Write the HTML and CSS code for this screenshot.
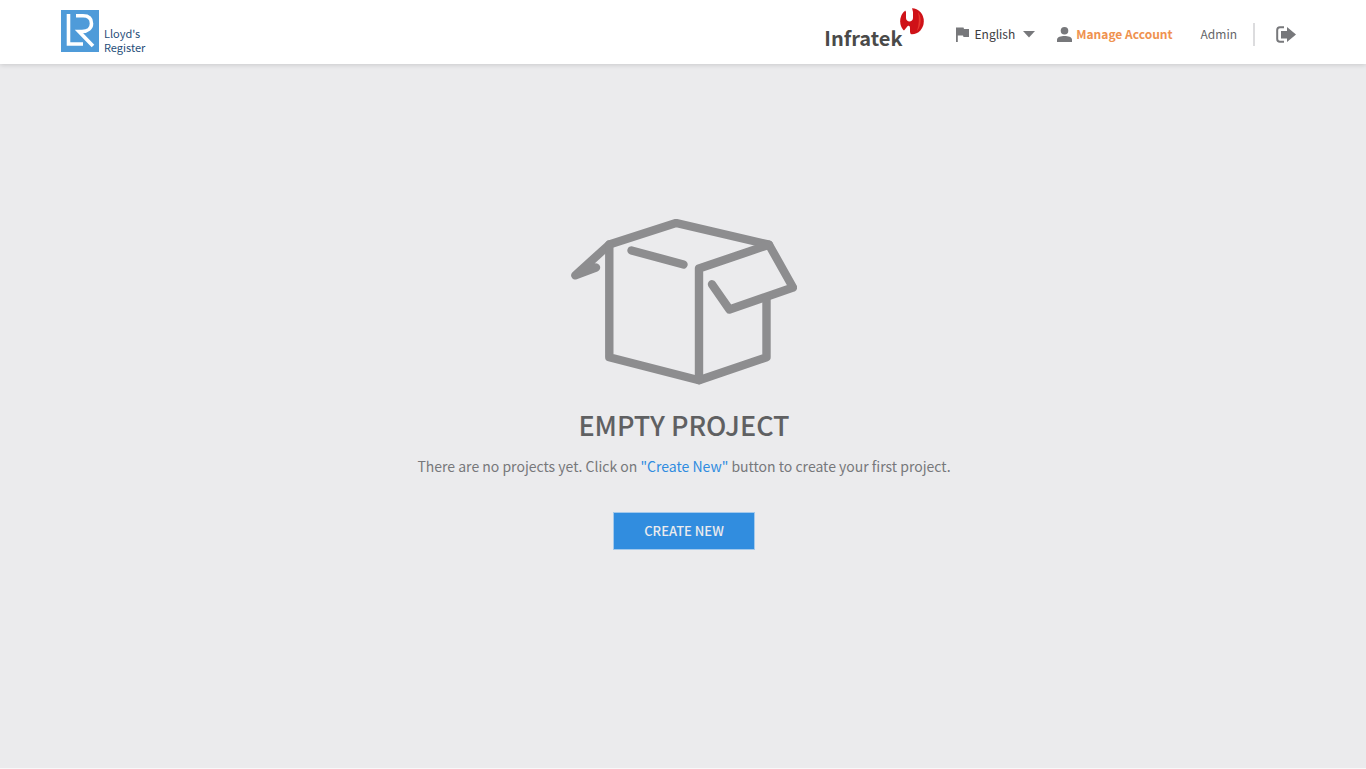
FILE: index.html
```html
<!DOCTYPE html>
<html lang="en">
<head>
<meta charset="utf-8">
<meta name="viewport" content="width=device-width, initial-scale=1">
<title>Projects</title>
<link rel="stylesheet" href="styles.css">
</head>
<body>
<header class="topbar">
  <a class="brand" href="#">
    <svg class="brand-mark" width="38" height="42" viewBox="0 0 38 42" aria-hidden="true">
      <rect width="38" height="42" fill="#4f9bd9"/>
      <path d="M7.500 4V34H22" fill="none" stroke="#fff" stroke-width="3.600"/>
      <path d="M15 5.800H22C28 5.800 30.500 9 30.500 13.500S27 21.500 21 21.500H18L32 36" fill="none" stroke="#fff" stroke-width="3.600"/>
    </svg>
    <span class="brand-name">Lloyd's<br>Register</span>
  </a>
  <div class="tools">
    <div class="partner">
      <span class="partner-name">Infratek</span>
      <svg class="partner-mark" width="24" height="27" viewBox="0 0 24 27" aria-hidden="true">
        <ellipse cx="12" cy="13.300" rx="11.800" ry="13" fill="#cf1218"/>
        <path d="M18 4C21.500 8 22 17 17 23C19 17 19.500 10 18 4Z" fill="#e8392f"/>
        <path d="M4 0L6 4V10C6 14.500 13 14.500 13 10V4L12 0Z" fill="#fff"/>
        <path d="M0 22L4 22.500L6.500 19.500C8 17 10 17.500 10 20V24L11 27H0Z" fill="#fff"/>
      </svg>
    </div>
    <button class="language" type="button">
      <svg width="13" height="15" viewBox="0 0 13 15" aria-hidden="true"><path d="M0 .5H7.500L8 2H13V10H7.500L7 8.500H1.800V15H0Z" fill="#77787b"/></svg>
      <span>English</span>
      <svg class="caret" width="12" height="7" viewBox="0 0 12 7" aria-hidden="true"><path d="M0 0H12L6 6.500Z" fill="#77787b"/></svg>
    </button>
    <a class="account" href="#">
      <svg width="15" height="15" viewBox="0 0 15 15" aria-hidden="true"><circle cx="7.500" cy="3.800" r="3.800" fill="#77787b"/><path d="M0 15V12.500C0 10 4 9 7.500 9S15 10 15 12.500V15Z" fill="#77787b"/></svg>
      <span>Manage Account</span>
    </a>
    <span class="user">Admin</span>
    <button class="logout" type="button" aria-label="Log out">
      <svg width="20" height="17" viewBox="0 0 20 17" aria-hidden="true"><path d="M8 1.200H4Q1.200 1.200 1.200 4V13Q1.200 15.800 4 15.800H8" fill="none" stroke="#77787b" stroke-width="2"/><path d="M5 5H11V1L20 8.500L11 16V12.500H5Z" fill="#77787b"/></svg>
    </button>
  </div>
</header>
<main class="empty">
  <svg class="box" width="226" height="166" viewBox="571 219 226 166" fill="none" stroke="#8d8d8f" stroke-width="8.400" stroke-linecap="round" stroke-linejoin="round" aria-hidden="true">
    <path d="M596 267.500L575.300 275.300L609.300 244.500L676 223L769 244.700L793 287.500L729.500 309.500L712 284.300"/>
    <path d="M609.300 244.500V357.300L699 380.200L766.500 357.300V298"/>
    <path d="M699 380V268.500L769 244.700M631.500 250.500L683.500 264.500"/>
  </svg>
  <h1 class="title">EMPTY PROJECT</h1>
  <p class="hint">There are no projects yet. Click on <a href="#">"Create New"</a> button to create your first project.</p>
  <button class="create" type="button">CREATE NEW</button>
</main>
</body>
</html>
```
FILE: styles.css
```css
* { box-sizing: border-box; }
body {
  display: flex;
  flex-direction: column;
  min-height: 100vh;
  margin: 0;
  background: #ebebed;
  border-bottom: 1px solid #f8f8f9;
  font-family: "Noto Sans CJK SC", "Noto Sans", sans-serif;
  font-size: 12px;
  line-height: 20px;
  color: #77787b;
}
button {
  padding: 0;
  border: 0;
  background: none;
  font: inherit;
  cursor: pointer;
}
a { text-decoration: none; }
svg { display: block; flex: none; }
.topbar {
  display: flex;
  justify-content: space-between;
  height: 64px;
  padding: 0 70px 0 61px;
  background: #fff;
  box-shadow: 0 1px 5px rgba(0, 0, 0, 0.15);
}
.brand {
  display: flex;
  align-items: flex-start;
  gap: 5px;
  padding-top: 10px;
  color: #1f4e79;
}
.brand-name {
  padding-top: 16px;
  font-size: 11px;
  line-height: 14px;
}
.tools {
  display: flex;
  align-items: center;
  padding-top: 4px;
}
.partner {
  display: flex;
  align-items: center;
  margin-right: 32px;
}
.partner-name {
  padding-top: 8px;
  font-size: 20px;
  font-weight: 700;
  line-height: 24px;
  color: #4a4a49;
}
.partner-mark { align-self: flex-start; margin: -10px 0 0 -3px; }
.language {
  display: flex;
  align-items: center;
  gap: 6px;
  margin-right: 22px;
  color: #3c3c3e;
}
.caret { margin-left: 2px; }
.account {
  display: flex;
  align-items: center;
  gap: 4px;
  margin-right: 28px;
  color: #ef924f;
  font-weight: 700;
}
.user {
  padding-right: 16px;
  color: #646568;
}
.logout {
  padding: 3px 0 3px 21px;
  border-left: 2px solid #dcdcde;
}
.empty {
  display: flex;
  flex-direction: column;
  align-items: center;
  padding: 155px 20px 40px 22px;
  text-align: center;
}
.title {
  margin: 20px 0 0;
  font-size: 27px;
  font-weight: 500;
  line-height: 40px;
  color: #5f6062;
}
.hint {
  margin: 9px 0 0;
  font-size: 14px;
  line-height: 24px;
}
.hint a { color: #2f8ce0; }
.create {
  margin-top: 34px;
  padding: 8px 30px;
  border: 1px solid #a3c9ec;
  background: #318ddf;
  color: #ebebed;
  font-size: 13px;
  font-weight: 500;
}
```
